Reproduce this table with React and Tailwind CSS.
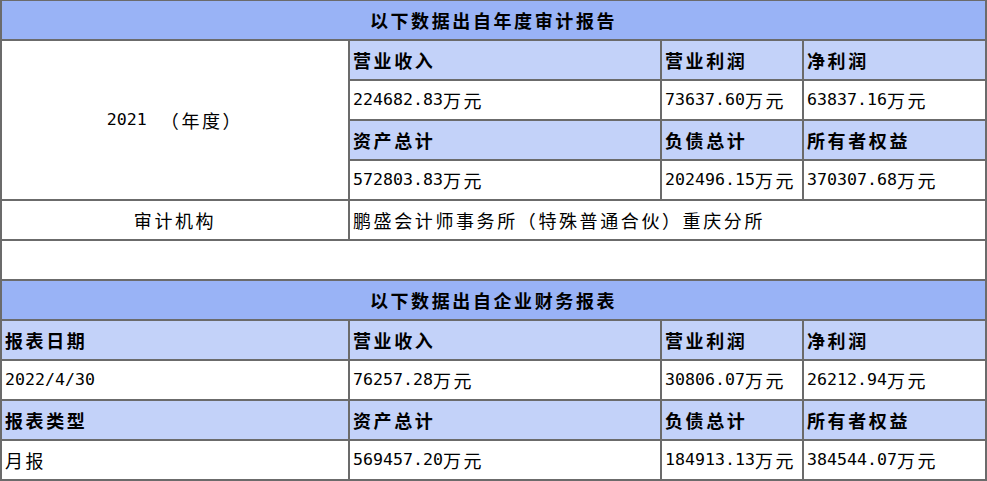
import React from 'react';

const head = 'bg-[#99b3f6] font-bold justify-center';
const sub = 'bg-[#c3d2f9] font-bold';
const val = 'bg-white';

function Num({ children, className = '' }) {
  return (
    <span className={`font-['DejaVu_Sans_Mono','Liberation_Mono',monospace] text-[16.6px] tracking-normal ${className}`}>
      {children}
    </span>
  );
}

function Cell({ className = '', children }) {
  return (
    <div className={`flex items-center px-[3px] whitespace-nowrap overflow-hidden ${className}`}>
      {children}
    </div>
  );
}

function Money({ v }) {
  return (
    <>
      <Num>{v}</Num>
      <span>万元</span>
    </>
  );
}

export default function App() {
  return (
    <div className="w-[987px] h-[481px] bg-white font-['Noto_Sans_CJK_SC',sans-serif] text-[18px] tracking-[2.6px] text-black">
      <div className="grid grid-cols-[346px_310px_140px_181px] grid-rows-[repeat(12,38px)] gap-[2px] bg-[#6b6b6b] pt-px px-[2px] pb-[2px]">
        <Cell className={`${head} col-span-4`}>以下数据出自年度审计报告</Cell>

        <Cell className="bg-white row-span-4 justify-center">
          <Num className="mr-[14px]">2021</Num>
          <span>（年度）</span>
        </Cell>
        <Cell className={sub}>营业收入</Cell>
        <Cell className={sub}>营业利润</Cell>
        <Cell className={sub}>净利润</Cell>
        <Cell className={val}><Money v="224682.83" /></Cell>
        <Cell className={val}><Money v="73637.60" /></Cell>
        <Cell className={val}><Money v="63837.16" /></Cell>
        <Cell className={sub}>资产总计</Cell>
        <Cell className={sub}>负债总计</Cell>
        <Cell className={sub}>所有者权益</Cell>
        <Cell className={val}><Money v="572803.83" /></Cell>
        <Cell className={val}><Money v="202496.15" /></Cell>
        <Cell className={val}><Money v="370307.68" /></Cell>

        <Cell className="bg-white justify-center">审计机构</Cell>
        <Cell className="bg-white col-span-3">鹏盛会计师事务所（特殊普通合伙）重庆分所</Cell>

        <Cell className="bg-white col-span-4" />

        <Cell className={`${head} col-span-4`}>以下数据出自企业财务报表</Cell>

        <Cell className={sub}>报表日期</Cell>
        <Cell className={sub}>营业收入</Cell>
        <Cell className={sub}>营业利润</Cell>
        <Cell className={sub}>净利润</Cell>
        <Cell className={val}><Num>2022/4/30</Num></Cell>
        <Cell className={val}><Money v="76257.28" /></Cell>
        <Cell className={val}><Money v="30806.07" /></Cell>
        <Cell className={val}><Money v="26212.94" /></Cell>
        <Cell className={sub}>报表类型</Cell>
        <Cell className={sub}>资产总计</Cell>
        <Cell className={sub}>负债总计</Cell>
        <Cell className={sub}>所有者权益</Cell>
        <Cell className={val}>月报</Cell>
        <Cell className={val}><Money v="569457.20" /></Cell>
        <Cell className={val}><Money v="184913.13" /></Cell>
        <Cell className={val}><Money v="384544.07" /></Cell>
      </div>
    </div>
  );
}
